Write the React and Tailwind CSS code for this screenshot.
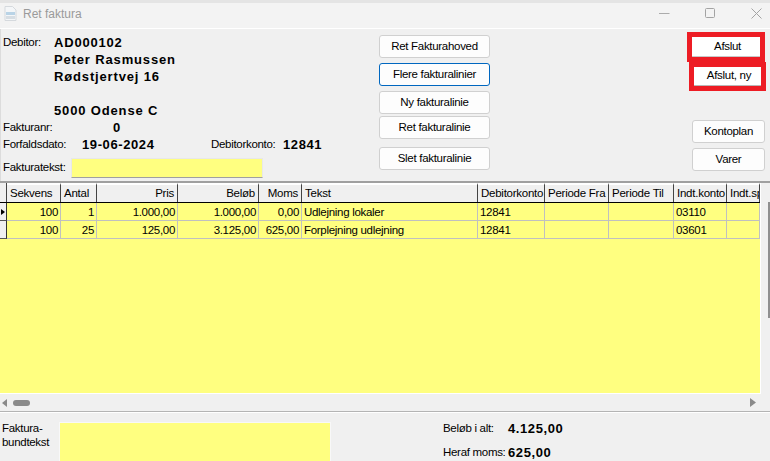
const cols = [
  { h: "Sekvens", w: "w-[54px]", a: "text-left", r: "text-right" },
  { h: "Antal", w: "w-[36px]", a: "text-left", r: "text-right" },
  { h: "Pris", w: "w-[81px]", a: "text-right", r: "text-right" },
  { h: "Beløb", w: "w-[81px]", a: "text-right", r: "text-right" },
  { h: "Moms", w: "w-[43px]", a: "text-right", r: "text-right" },
  { h: "Tekst", w: "w-[176px]", a: "text-left", r: "text-left" },
  { h: "Debitorkonto", w: "w-[67px]", a: "text-left", r: "text-left" },
  { h: "Periode Fra", w: "w-[64px]", a: "text-left", r: "text-left" },
  { h: "Periode Til", w: "w-[65px]", a: "text-left", r: "text-left" },
  { h: "Indt.konto", w: "w-[53px]", a: "text-left", r: "text-left" },
  { h: "Indt.sp", w: "w-[33px]", a: "text-left", r: "text-left" },
];
const rows = [
  ["100", "1", "1.000,00", "1.000,00", "0,00", "Udlejning lokaler", "12841", "", "", "03110", ""],
  ["100", "25", "125,00", "3.125,00", "625,00", "Forplejning udlejning", "12841", "", "", "03601", ""],
];

function Btn({ children, focus, className = "" }) {
  return (
    <button className={`flex items-center justify-center bg-[#fdfdfd] rounded-[3px] border text-black h-[23px] ${focus ? "border-[#0067c0]" : "border-[#d0d0d0]"} ${className}`}>
      {children}
    </button>
  );
}

function Bold({ children, className = "" }) {
  return <span className={`font-bold text-[13px] tracking-[0.6px] text-black ${className}`}>{children}</span>;
}

export default function App() {
  return (
    <div className="w-[770px] h-[461px] overflow-hidden bg-[#f0f0f0] flex flex-col text-[11.5px] tracking-[-0.3px] text-black font-['Liberation_Sans',Arial,sans-serif]">
      {/* title bar */}
      <div className="h-[29px] shrink-0 bg-[#f3f3f3] border-b border-white border-t-[3px] border-t-[#e4e4e4] flex items-center pl-[4px] pb-[4px]">
        <svg width="13" height="15" viewBox="0 0 13 15">
          <path d="M1 .5h7.5L12 4v10.5H1z" fill="#f4f6f8" stroke="#d5d9dd" />
          <rect x="2" y="6" width="9" height="3" fill="#b9d3e6" />
          <rect x="2" y="10" width="9" height="3" fill="#d6dde3" />
        </svg>
        <span className="ml-[6px] text-[12px] tracking-normal text-[#9a9a9a]">Ret faktura</span>
        <div className="ml-auto flex items-center">
          <svg width="11" height="11" viewBox="0 0 11 11"><path d="M0 5.5h10.5" stroke="#ababab" /></svg>
          <svg width="11" height="11" viewBox="0 0 11 11" className="ml-[35px]"><rect x=".5" y=".5" width="9" height="9" rx="1" fill="none" stroke="#a3a3a3" /></svg>
          <svg width="11" height="11" viewBox="0 0 11 11" className="ml-[35px] mr-[8px]"><path d="M.5.5l10 10M10.5.5l-10 10" stroke="#a3a3a3" /></svg>
        </div>
      </div>

      {/* header panel */}
      <div className="h-[152px] shrink-0 flex border-l border-[#dcdcdc]">
        <div className="w-[378px] shrink-0 pl-[2px] pt-[5px] flex flex-col">
          <div className="flex flex-col leading-[17px]">
            <div className="flex h-[17px] items-center">
              <span className="w-[51px]">Debitor:</span>
              <Bold className="tracking-[0.8px]">AD000102</Bold>
            </div>
            <div className="h-[17px] pl-[51px]"><Bold className="tracking-[0.85px]">Peter Rasmussen</Bold></div>
            <div className="h-[17px] pl-[51px]"><Bold className="tracking-[0.85px]">Rødstjertvej 16</Bold></div>
            <div className="h-[17px]" />
            <div className="h-[17px] pl-[51px]"><Bold className="tracking-[0.85px]">5000 Odense C</Bold></div>
            <div className="flex h-[17px] items-center">
              <span className="w-[110px]">Fakturanr:</span>
              <Bold>0</Bold>
            </div>
            <div className="flex h-[17px] items-center">
              <span className="w-[79px]">Forfaldsdato:</span>
              <Bold className="w-[129px]">19-06-2024</Bold>
              <span className="w-[72px]">Debitorkonto:</span>
              <Bold>12841</Bold>
            </div>
          </div>
          <div className="flex items-center mt-[5px]">
            <span className="w-[68px]">Fakturatekst:</span>
            <div className="w-[192px] h-[20px] bg-[#ffff80] border border-[#e8e8e8] border-b-[#a0a0a0]" />
          </div>
        </div>

        <div className="w-[111px] shrink-0 pt-[6px] flex flex-col">
          <Btn>Ret Fakturahoved</Btn>
          <Btn focus className="mt-[5px]">Flere fakturalinier</Btn>
          <Btn className="mt-[5px]">Ny fakturalinie</Btn>
          <Btn className="mt-[2px]">Ret fakturalinie</Btn>
          <Btn className="mt-[8px]">Slet fakturalinie</Btn>
        </div>

        <div className="ml-[197px] w-[80px] shrink-0 pt-[3px] flex flex-col">
          <div className="w-[78px] h-[30px] border-[5px] border-[#ed1c24]">
            <div className="w-full h-full pl-[3px] bg-white border-b border-[#c8c8c8] flex items-center justify-center">Afslut</div>
          </div>
          <div className="ml-[2px] w-[77px] h-[29px] border-[5px] border-[#ed1c24]">
            <div className="w-full h-full pl-[3px] bg-white border-b border-[#b8b8b8] flex items-center justify-center">Afslut, ny</div>
          </div>
          <Btn className="mt-[29px] ml-[5px] w-[73px]">Kontoplan</Btn>
          <Btn className="mt-[5px] ml-[5px] w-[73px]">Varer</Btn>
        </div>
      </div>

      {/* grid */}
      <div className="h-[2px] shrink-0 bg-[#a0a0a0]" />
      <div className="h-[211px] shrink-0 flex">
        <div className="w-[761px] h-full bg-[#ffff80] border-r border-b border-white flex flex-col overflow-hidden">
          <div className="flex h-[20px] shrink-0 bg-[#f0f0f0] border-b border-black">
            <div className="w-[7px] shrink-0 border-r border-r-[#444]" />
            {cols.map((c) => (
              <div key={c.h} className={`${c.w} ${c.a} shrink-0 px-[3px] border-r border-r-[#444] border-t-2 border-t-white leading-[17px] tracking-[-0.25px] whitespace-nowrap overflow-hidden`}>{c.h}</div>
            ))}
          </div>
          {rows.map((r, i) => (
            <div key={i} className="flex h-[18px] shrink-0">
              <div className="w-[7px] shrink-0 bg-[#f0f0f0] border-r border-r-[#333] border-b border-b-[#555] flex items-center">
                {i === 0 && <svg width="4" height="6" viewBox="0 0 4 6" className="ml-[1px]"><path d="M0 0l4 3-4 3z" fill="#000" /></svg>}
              </div>
              {r.map((v, j) => (
                <div key={j} className={`${cols[j].w} ${cols[j].r} shrink-0 px-[2px] pt-[1px] border-r border-b border-[#c0c0c0] leading-[17px] whitespace-nowrap overflow-hidden`}>{v}</div>
              ))}
            </div>
          ))}
        </div>
        <div className="flex-1 h-full bg-[#f0f0f0] flex justify-end">
          <div className="mt-[19px] w-[2px] h-[116px] bg-[#8f8f8f]" />
        </div>
      </div>

      {/* horizontal scrollbar */}
      <div className="h-[17px] shrink-0 bg-[#f0f0f0] flex items-center pl-[2px] pr-[14px]">
        <svg width="5" height="8" viewBox="0 0 5 8"><path d="M5 0v8L0 4z" fill="#8a8a8a" /></svg>
        <div className="ml-[6px] w-[17px] h-[6px] rounded-[3px] bg-[#8a8a8a]" />
        <svg width="6" height="9" viewBox="0 0 6 9" className="ml-auto"><path d="M0 0v9l6-4.5z" fill="#8a8a8a" /></svg>
      </div>
      <div className="h-px shrink-0 bg-[#b4b4b4]" />
      <div className="h-px shrink-0 bg-white" />

      {/* footer */}
      <div className="flex-1 flex pl-[2px] pt-[9px]">
        <div className="w-[57px] leading-[14px] mt-[-1px]">Faktura-<br />bundtekst</div>
        <div className="w-[272px] h-[50px] bg-[#ffff80] border border-[#f8f8f8]" />
        <div className="ml-[112px] flex flex-col">
          <div className="flex items-center h-[17px] mt-[-2px]">
            <span className="w-[65px]">Beløb i alt:</span>
            <Bold>4.125,00</Bold>
          </div>
          <div className="flex items-center h-[17px] mt-[7px]">
            <span className="w-[65px]">Heraf moms:</span>
            <Bold>625,00</Bold>
          </div>
        </div>
      </div>
    </div>
  );
}
